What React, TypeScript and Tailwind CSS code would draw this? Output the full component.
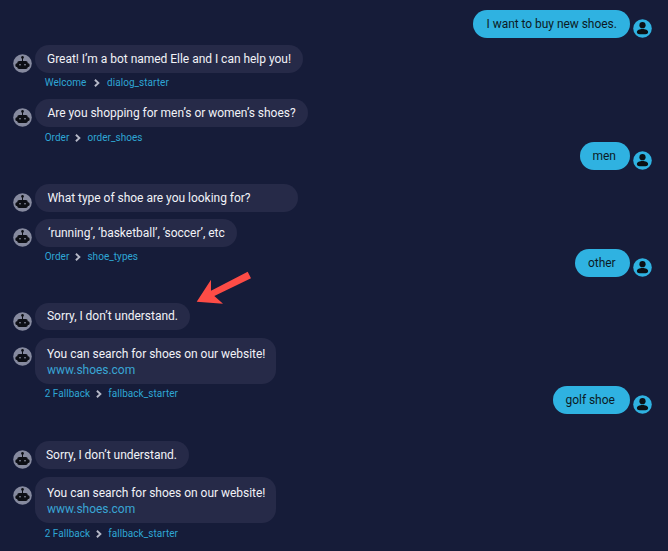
import React from "react";

function BotAvatar() {
  return (
    <svg viewBox="0 0 19 19" className="mt-[9px] h-[19px] w-[19px] shrink-0">
      <circle cx="9.5" cy="9.5" r="9.3" fill="#868a9f" />
      <g fill="#0c0e14">
        <circle cx="9.5" cy="3.4" r="1.3" />
        <rect x="9" y="3.4" width="1" height="4" />
        <rect x="4.3" y="7" width="10.4" height="8" rx="1.8" />
        <rect x="2.4" y="9.3" width="14.2" height="3.6" rx="1.5" />
      </g>
      <circle cx="7" cy="10.7" r="0.8" fill="#9da1b5" />
      <circle cx="12" cy="10.7" r="0.8" fill="#9da1b5" />
    </svg>
  );
}

function UserAvatar() {
  return (
    <svg viewBox="0 0 19 19" className="mt-[9px] ml-[2.5px] h-[19px] w-[19px] shrink-0">
      <circle cx="9.5" cy="9.5" r="9.3" fill="#2fb2e1" />
      <circle cx="9.5" cy="6.2" r="3.1" fill="#0b1014" />
      <path d="M3.9 13C3.9 10.9 6.6 10 9.5 10s5.6.9 5.6 3c0 1.7-1.2 2.2-2.6 2.2h-6c-1.4 0-2.6-.5-2.6-2.2Z" fill="#0b1014" />
    </svg>
  );
}

function Bot({ row, bubble, children }: { row: string; bubble: string; children: React.ReactNode }) {
  return (
    <div className={`flex items-start pl-[13px] ${row}`}>
      <BotAvatar />
      <div className={`ml-[3px] whitespace-nowrap bg-[#262a48] text-[12px] leading-[16px] tracking-[-0.025px] text-[#f1f2f7] ${bubble}`}>
        {children}
      </div>
    </div>
  );
}

function User({ row, bubble, children }: { row: string; bubble: string; children: React.ReactNode }) {
  return (
    <div className={`flex h-[28px] items-start justify-end pr-[16.5px] ${row}`}>
      <div className={`h-[28px] rounded-full whitespace-nowrap bg-[#2fb2e1] pt-[6px] text-[12px] leading-[16px] tracking-[-0.04px] text-[#0c1a24] ${bubble}`}>
        {children}
      </div>
      <UserAvatar />
    </div>
  );
}

function Crumb({ row, gap = "mx-[6px]", from, to }: { row: string; gap?: string; from: string; to: string }) {
  return (
    <div className={`flex h-[18px] items-center pl-[44.7px] text-[10px] leading-[18px] tracking-[0.04px] text-[#2ea6d4] ${row}`}>
      <span>{from}</span>
      <svg viewBox="0 0 6 8" className={`h-[8px] w-[6px] ${gap}`} fill="none" stroke="#b4b7c6" strokeWidth="1.9">
        <path d="M.9 .7 4.4 4 .9 7.3" />
      </svg>
      <span>{to}</span>
    </div>
  );
}

export default function App() {
  return (
    <main className="relative h-[551px] w-[668px] overflow-hidden bg-[#161c39] pt-[10px] font-['Roboto',sans-serif]">
      <User row="" bubble="w-[157px] pl-[13.5px]">I want to buy new shoes.</User>
      <Bot row="mt-[7px] h-[28px]" bubble="h-[28px] w-[268px] rounded-full pt-[6px] pl-[12px]">Great! I’m a bot named Elle and I can help you!</Bot>
      <Crumb row="mt-[1px]" gap="mx-[7.3px]" from="Welcome" to="dialog_starter" />
      <Bot row="mt-[7px] h-[28px]" bubble="h-[28px] w-[272.5px] rounded-full pt-[6px] pl-[12.5px]">Are you shopping for men’s or women’s shoes?</Bot>
      <Crumb row="mt-[2px]" from="Order" to="order_shoes" />
      <User row="mt-[-5px]" bubble="w-[50.5px] pl-[13px]">men</User>
      <Bot row="mt-[14px] h-[28px]" bubble="h-[28px] w-[262.5px] rounded-full pt-[6px] pl-[12.5px]">What type of shoe are you looking for?</Bot>
      <Bot row="mt-[7px] h-[28px]" bubble="h-[28px] w-[202px] rounded-full pt-[6px] pl-[13px]">‘running’, ‘basketball’, ‘soccer’, etc</Bot>
      <Crumb row="mt-[1px]" from="Order" to="shoe_types" />
      <User row="mt-[-17px]" bubble="w-[55px] pl-[13px]">other</User>
      <Bot row="mt-[26px] h-[27px]" bubble="h-[27px] w-[155px] rounded-full pt-[5px] pl-[12px]">Sorry, I don’t understand.</Bot>
      <Bot row="mt-[8px] h-[46px]" bubble="h-[46px] w-[241px] rounded-[14px] pt-[8px] pl-[12px]">
        <div>You can search for shoes on our website!</div>
        <a className="block text-[#39a5d4]">www.shoes.com</a>
      </Bot>
      <Crumb row="mt-[1px]" from="2 Fallback" to="fallback_starter" />
      <User row="mt-[-17px]" bubble="w-[77.5px] pl-[13px]">golf shoe</User>
      <Bot row="mt-[27px] h-[28px]" bubble="h-[28px] w-[154px] rounded-full pt-[6px] pl-[11px]">Sorry, I don’t understand.</Bot>
      <Bot row="mt-[8px] h-[46px]" bubble="h-[46px] w-[241px] rounded-[14px] pt-[8px] pl-[12px]">
        <div>You can search for shoes on our website!</div>
        <a className="block text-[#39a5d4]">www.shoes.com</a>
      </Bot>
      <Crumb row="mt-[2px]" from="2 Fallback" to="fallback_starter" />
      <svg viewBox="0 0 56 34" className="absolute top-[271px] left-[196px] h-[34px] w-[56px]" fill="#fd4c46">
        <path d="M.7 30.7 15 8.7V19.7L51.7.7 55 7.3 18.3 25 27 32.7Z" />
      </svg>
    </main>
  );
}
